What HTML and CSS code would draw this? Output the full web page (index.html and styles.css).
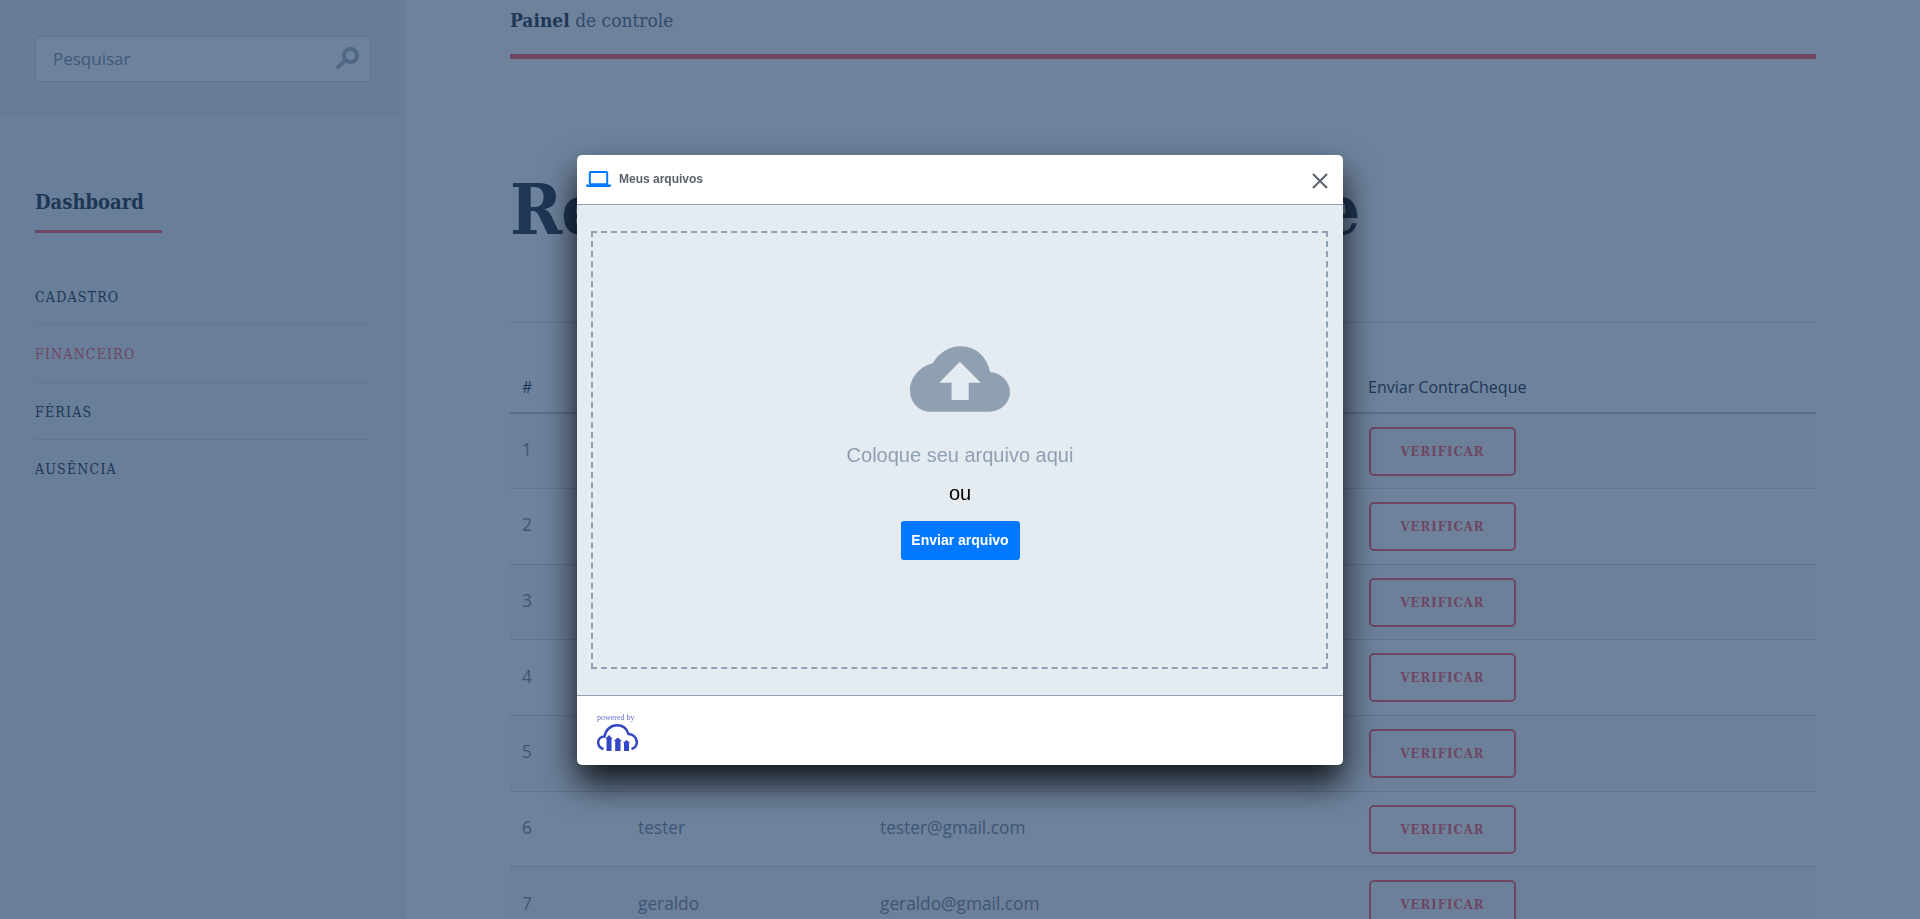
FILE: index.html
```html
<!DOCTYPE html>
<html lang="pt-BR">
<head>
    <meta charset="UTF-8">
    <meta name="viewport" content="width=device-width, initial-scale=1.0">
    <title>Painel de controle</title>
    <link rel="stylesheet" href="styles.css">
</head>
<body>

    <div class="layout">
        <aside class="sidebar">
            <div class="search-box">
                <div class="search-input">
                    <span>Pesquisar</span>
                    <svg class="search-icon" viewBox="0 0 24 22" width="24" height="22">
                        <circle cx="14.5" cy="8.5" r="6.6" fill="none" stroke="currentColor" stroke-width="4"/>
                        <path d="M9.5 13 L2 20" stroke="currentColor" stroke-width="4" stroke-linecap="round"/>
                    </svg>
                </div>
            </div>
            <div class="side-nav">
                <h2>Dashboard</h2>
                <ul>
                    <li>Cadastro</li>
                    <li class="active">Financeiro</li>
                    <li>Férias</li>
                    <li>Ausência</li>
                </ul>
            </div>
        </aside>

        <main class="content">
            <div class="top-title"><b>Painel</b> de controle</div>
            <h1>Recibo de ContraCheque</h1>
            <hr>
            <table>
                <thead>
                    <tr>
                        <th class="col-id">#</th>
                        <th class="col-name">Nome</th>
                        <th class="col-mail">Email</th>
                        <th>Enviar ContraCheque</th>
                    </tr>
                </thead>
                <tbody>
                    <tr><td>1</td><td>admin</td><td>admin@gmail.com</td><td><button>Verificar</button></td></tr>
                    <tr><td>2</td><td>maria</td><td>maria@gmail.com</td><td><button>Verificar</button></td></tr>
                    <tr><td>3</td><td>joao</td><td>joao@gmail.com</td><td><button>Verificar</button></td></tr>
                    <tr><td>4</td><td>carlos</td><td>carlos@gmail.com</td><td><button>Verificar</button></td></tr>
                    <tr><td>5</td><td>ana</td><td>ana@gmail.com</td><td><button>Verificar</button></td></tr>
                    <tr><td>6</td><td>tester</td><td>tester@gmail.com</td><td><button>Verificar</button></td></tr>
                    <tr><td>7</td><td>geraldo</td><td>geraldo@gmail.com</td><td><button>Verificar</button></td></tr>
                </tbody>
            </table>
        </main>
    </div>

    <div class="overlay">
        <div class="modal">
            <div class="modal-head">
                <svg class="laptop" viewBox="0 0 25 16" width="25" height="16">
                    <rect x="3.8" y="1" width="17.4" height="12.2" rx="1" fill="none" stroke="#0078ff" stroke-width="2"/>
                    <path d="M0 13.5 H25 V14.5 L24 16 H1 L0 14.5 Z" fill="#0078ff"/>
                </svg>
                <span class="modal-title">Meus arquivos</span>
                <svg class="close" viewBox="0 0 16 16" width="16" height="16">
                    <path d="M1 1 L15 15 M15 1 L1 15" stroke="#5a616a" stroke-width="2" fill="none"/>
                </svg>
            </div>
            <div class="modal-body">
                <div class="dropzone">
                    <svg class="cloud" viewBox="0 0 101 66" width="100" height="66">
                        <path d="M21 66 C9 66 0 57 0 44 C0 32 10 20 23 17 C29 7 39 0 51 0 C68 0 78 12 81 26 C92 27 101 36 101 46 C101 57 92 66 80 66 Z" fill="#90a0b3"/>
                        <path d="M50.3 15.7 L71.5 36.7 H59.3 V54.3 H42 V36.7 H29.5 Z" fill="#e4ebf1"/>
                    </svg>
                    <div class="drop-text">Coloque seu arquivo aqui</div>
                    <div class="drop-or">ou</div>
                    <button class="upload-btn">Enviar arquivo</button>
                </div>
            </div>
            <div class="modal-foot">
                <div class="powered">powered by</div>
                <svg class="logo" viewBox="0 0 41 27" width="41" height="27">
                    <path d="M6.5 25 C3 24 1.2 21.5 1.2 18.5 C1.2 15 4 12.5 7.5 12.5 C8.5 6 13.5 1.3 20 1.3 C26 1.3 30 5 31.5 10 C36 10 39.8 13.5 39.8 18 C39.8 21.5 38 24 34.5 25" fill="none" stroke="#3448c5" stroke-width="2.5"/>
                    <path d="M8.3 15 L12 11 L15.7 15 H14.5 V27 H9.5 V15 Z" fill="#3448c5"/>
                    <path d="M16.7 17 L20.8 13.5 L25 17 H23.5 V27 H18.2 V17 Z" fill="#3448c5"/>
                    <path d="M26 19 L29.5 16 L33 19 H32 V27 H27 V19 Z" fill="#3448c5"/>
                </svg>
            </div>
        </div>
    </div>

</body>
</html>
```

FILE: styles.css
```css
html, body {
    margin: 0;
    padding: 0;
    height: 100%;
    overflow: hidden;
}

body {
    background-color: #fff;
    color: #38444f;
    font-family: "Open Sans", sans-serif;
}

.layout {
    display: flex;
    height: 100%;
}

/* sidebar */
.sidebar {
    width: 406px;
    flex-shrink: 0;
    background-color: #f3f4f6;
}

.search-box {
    height: 117px;
    padding: 36px 35px 0 35px;
    box-sizing: border-box;
    background-color: #eff1f3;
}

.search-input {
    height: 46px;
    box-sizing: border-box;
    display: flex;
    align-items: center;
    justify-content: space-between;
    padding: 0 10px 2px 17px;
    background-color: #fff;
    border: 1px solid #d8dde3;
    border-radius: 5px;
    font-size: 17px;
    color: #8d97a3;
}

.search-icon {
    color: #b4bcc6;
}

.side-nav {
    padding: 0 35px;
}

.side-nav h2 {
    display: inline-block;
    width: 127px;
    margin: 70px 0 0;
    padding-bottom: 13px;
    border-bottom: 3px solid #ff6b70;
    font-family: "DejaVu Serif Condensed", "DejaVu Serif", serif;
    font-size: 20px;
    line-height: 30px;
    font-weight: bold;
}

.side-nav ul {
    list-style: none;
    margin: 35px 0 0;
    padding: 0;
}

.side-nav li {
    height: 57.4px;
    box-sizing: border-box;
    padding-top: 18px;
    border-bottom: 1px solid #dfe2e6;
    font-family: "DejaVu Serif Condensed", "DejaVu Serif", serif;
    font-size: 14px;
    line-height: 22px;
    letter-spacing: 1.2px;
    text-transform: uppercase;
    font-weight: normal;
}

.side-nav li:last-child {
    border-bottom: none;
}

.side-nav li.active {
    color: #ff6b70;
}

/* main */
.content {
    flex: 1;
    padding: 0 104px;
}

.top-title {
    height: 54px;
    box-sizing: border-box;
    padding-top: 6px;
    font-family: "DejaVu Serif Condensed", "DejaVu Serif", serif;
    font-size: 19px;
    line-height: 28px;
    color: #6a7684;
}

.top-title b {
    color: #38444f;
}

.top-title::after {
    content: "";
    display: block;
    height: 5px;
    margin-top: 20px;
    background-color: #ff6b70;
}

.content h1 {
    margin: 114px 0 0;
    font-family: "DejaVu Serif Condensed", "DejaVu Serif", serif;
    font-size: 70px;
    line-height: 84px;
    font-weight: bold;
    white-space: nowrap;
    letter-spacing: -1.2px;
}

.content hr {
    height: 1px;
    margin: 70px 0 0;
    border: none;
    background-color: #d8dbe0;
}

table {
    width: 100%;
    border-collapse: collapse;
    table-layout: fixed;
}

th {
    height: 90px;
    box-sizing: border-box;
    padding: 0 12px 13px;
    vertical-align: bottom;
    text-align: left;
    font-size: 16px;
    line-height: 24px;
    font-weight: normal;
    border-bottom: 2px solid #c9ced6;
}

.col-id { width: 116px; }
.col-name { width: 242px; }
.col-mail { width: 488px; }

td {
    height: 75.67px;
    box-sizing: border-box;
    padding: 0 12px 3px;
    font-size: 17.3px;
    color: #8a8f98;
    border-bottom: 1px solid #d8dbe0;
}

td:last-child {
    padding: 0 12px 0 13px;
}

tbody tr:nth-child(odd) {
    background-color: rgba(0, 0, 0, 0.02);
}

td button {
    display: block;
    width: 147px;
    height: 49px;
    background: none;
    border: 2.5px solid #ff6b70;
    border-radius: 5px;
    color: #ff6b70;
    font-family: "DejaVu Serif Condensed", "DejaVu Serif", serif;
    font-size: 13px;
    font-weight: bold;
    letter-spacing: 1px;
    text-transform: uppercase;
}

/* upload widget */
.overlay {
    position: fixed;
    top: 0;
    left: 0;
    right: 0;
    bottom: 0;
    background-color: rgba(14, 47, 90, 0.6);
}

.modal {
    position: absolute;
    top: 155px;
    left: 577px;
    width: 766px;
    height: 610px;
    display: flex;
    flex-direction: column;
    background-color: #fff;
    border-radius: 5px;
    box-shadow: 0 18px 34px rgba(0, 0, 0, 0.85);
    font-family: "Liberation Sans", Arial, sans-serif;
}

.modal-head {
    height: 50px;
    box-sizing: border-box;
    flex-shrink: 0;
    display: flex;
    align-items: center;
    padding: 0 15px 2px 9px;
    border-bottom: 1px solid #90a0b3;
}

.modal-title {
    margin-left: 8px;
    flex: 1;
    font-size: 12px;
    font-weight: bold;
    color: #5a616a;
}

.close {
    margin-top: 4px;
}

.modal-body {
    flex: 1;
    display: flex;
    padding: 26px 15px 26px 14px;
    background-color: #e4ebf1;
}

.dropzone {
    flex: 1;
    display: flex;
    flex-direction: column;
    align-items: center;
    padding: 113px 0 0 1px;
    border: 2px dashed #90a0b3;
}

.cloud {
    display: block;
}

.drop-text {
    margin-top: 31px;
    font-size: 20px;
    line-height: 24px;
    color: #90a0b3;
}

.drop-or {
    margin-top: 14px;
    font-size: 20px;
    line-height: 24px;
    color: #000;
}

.upload-btn {
    margin-top: 16px;
    width: 119px;
    height: 39px;
    padding-bottom: 2px;
    background-color: #0078ff;
    border: none;
    border-radius: 3px;
    color: #fff;
    font-family: "Liberation Sans", Arial, sans-serif;
    font-size: 14px;
    font-weight: bold;
}

.modal-foot {
    height: 70px;
    box-sizing: border-box;
    flex-shrink: 0;
    padding: 17px 20px 0;
    border-top: 1px solid #90a0b3;
    border-radius: 0 0 5px 5px;
}

.powered {
    font-family: "Liberation Serif", serif;
    font-size: 8px;
    line-height: 10px;
    color: #6a6fc8;
}

.logo {
    display: block;
    margin-top: 1px;
}
```
